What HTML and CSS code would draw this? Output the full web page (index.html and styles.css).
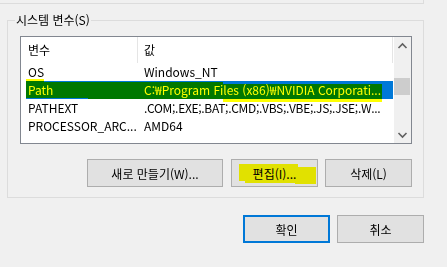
FILE: index.html
```html
<!DOCTYPE html>
<html lang="ko">
<head>
    <meta charset="UTF-8">
    <link rel="stylesheet" href="styles.css">
    <title>환경 변수</title>
</head>
<body>
    <div class="dialog">
        <div class="prev-group"></div>

        <div class="group">
            <span class="group-title">시스템 변수(S)</span>

            <div class="listbox">
                <div class="list">
                    <div class="list-head">
                        <span class="head-cell">변수</span>
                        <span class="head-cell">값</span>
                    </div>
                    <div class="row">
                        <span class="cell">OS</span>
                        <span class="cell">Windows_NT</span>
                    </div>
                    <div class="row selected">
                        <span class="cell">Path</span>
                        <span class="cell">C:₩Program Files (x86)₩NVIDIA Corporati...</span>
                    </div>
                    <div class="row">
                        <span class="cell">PATHEXT</span>
                        <span class="cell cell-tight">.COM;.EXE;.BAT;.CMD;.VBS;.VBE;.JS;.JSE;.W...</span>
                    </div>
                    <div class="row">
                        <span class="cell">PROCESSOR_ARC...</span>
                        <span class="cell">AMD64</span>
                    </div>
                </div>

                <div class="scrollbar">
                    <div class="sb-arrow">
                        <svg width="17" height="17" viewBox="0 0 17 17"><polyline points="4.5,11 8.5,7 12.5,11" /></svg>
                    </div>
                    <div class="sb-track">
                        <div class="sb-thumb"></div>
                    </div>
                    <div class="sb-arrow">
                        <svg width="17" height="17" viewBox="0 0 17 17"><polyline points="4.5,7 8.5,11 12.5,7" /></svg>
                    </div>
                </div>

                <!-- marker strokes over the Path row -->
                <span class="marker mk-a"></span>
                <span class="marker mk-b"></span>
                <span class="marker mk-c"></span>
                <span class="marker mk-d"></span>
            </div>

            <div class="group-buttons">
                <button class="btn btn-wide">새로 만들기(W)...</button>
                <button class="btn btn-marked">편집(I)...
                    <span class="marker ed-a"></span>
                    <span class="marker ed-b"></span>
                    <span class="marker ed-c"></span>
                </button>
                <button class="btn btn-last">삭제(L)</button>
            </div>
        </div>

        <div class="dialog-buttons">
            <button class="btn btn-default">확인</button>
            <button class="btn btn-last">취소</button>
        </div>
    </div>
</body>
</html>
```

FILE: styles.css
```css
body{
    margin: 0;
    background-color: #f0f0f0;
    font-family: "Noto Sans CJK KR", sans-serif;
    font-size: 12px;
    color: #000;
}
.dialog{
    width: 447px;
}
.prev-group{
    width: 423px;
    height: 3px;
    border-right: 1px solid #dcdcdc;
    border-bottom: 1px solid #dcdcdc;
}

/* group box */
.group{
    box-sizing: border-box;
    width: 417px;
    height: 178px;
    margin: 16px 0 0 7px;
    border: 1px solid #dcdcdc;
}
.group-title{
    display: block;
    width: fit-content;
    margin: -9px 0 0 7px;
    padding: 0 1px;
    line-height: 16px;
    background-color: #f0f0f0;
}

/* list view */
.listbox{
    position: relative;
    box-sizing: border-box;
    display: flex;
    width: 392px;
    height: 108px;
    margin: 8px 0 0 12px;
    border: 1px solid #828790;
    background-color: #fff;
}
.list{
    width: 373px;
    overflow: hidden;
}
.list-head{
    display: grid;
    grid-template-columns: 117px 255px;
    height: 26px;
}
.head-cell{
    padding-left: 7px;
    line-height: 26px;
    border-right: 1px solid #e5e5e5;
}
.head-cell + .head-cell{
    padding-left: 6px;
}
.row{
    display: grid;
    grid-template-columns: 112px 1fr;
    width: 367px;
    height: 18px;
    margin-left: 5px;
    line-height: 18px;
    white-space: nowrap;
}
.cell{
    padding-left: 2px;
    overflow: hidden;
}
.cell + .cell{
    padding-left: 6px;
}
.cell-tight{
    letter-spacing: -0.3px;
}
.row.selected{
    background-color: #0078d7;
    color: #fff;
}

/* scrollbar */
.scrollbar{
    display: flex;
    flex-direction: column;
    width: 17px;
    background-color: #f0f0f0;
}
.sb-arrow{
    height: 17px;
}
.sb-arrow svg{
    display: block;
}
.sb-arrow polyline{
    fill: none;
    stroke: #606060;
    stroke-width: 1.6;
}
.sb-track{
    flex: 1;
}
.sb-thumb{
    width: 16px;
    height: 17px;
    margin-top: 24px;
    background-color: #cdcdcd;
}

/* buttons */
.btn{
    box-sizing: border-box;
    width: 87px;
    height: 28px;
    margin: 0 8px 0 0;
    padding: 0;
    font: inherit;
    color: #000;
    background-color: #e1e1e1;
    border: 1px solid #adadad;
}
.btn-wide{
    width: 136px;
}
.btn-last{
    margin-right: 0;
}
.btn-marked{
    position: relative;
    margin-right: 7px;
}
.btn-default{
    border: 2px solid #0078d7;
    margin-right: 7px;
}
.group-buttons{
    display: flex;
    justify-content: flex-end;
    width: 392px;
    margin: 15px 0 0 12px;
}
.dialog-buttons{
    display: flex;
    justify-content: flex-end;
    width: 424px;
    margin-top: 17px;
}

/* yellow highlighter, multiplied onto what is under it */
.marker{
    position: absolute;
    background-color: #ffff00;
    mix-blend-mode: multiply;
}
.mk-a{ left: 5px;   top: 45px; width: 197px; height: 16px; }
.mk-b{ left: 67px;  top: 45px; width: 135px; height: 17px; }
.mk-c{ left: 202px; top: 47px; width: 159px; height: 18px; }
.mk-d{ left: 5px;   top: 42px; width: 18px;  height: 3px; }
.ed-a{ left: 7px;   top: 4px;  width: 59px;  height: 17px; }
.ed-b{ left: 13px;  top: 4px;  width: 53px;  height: 19px; }
.ed-c{ left: 63px;  top: 7px;  width: 21px;  height: 17px; }
```
